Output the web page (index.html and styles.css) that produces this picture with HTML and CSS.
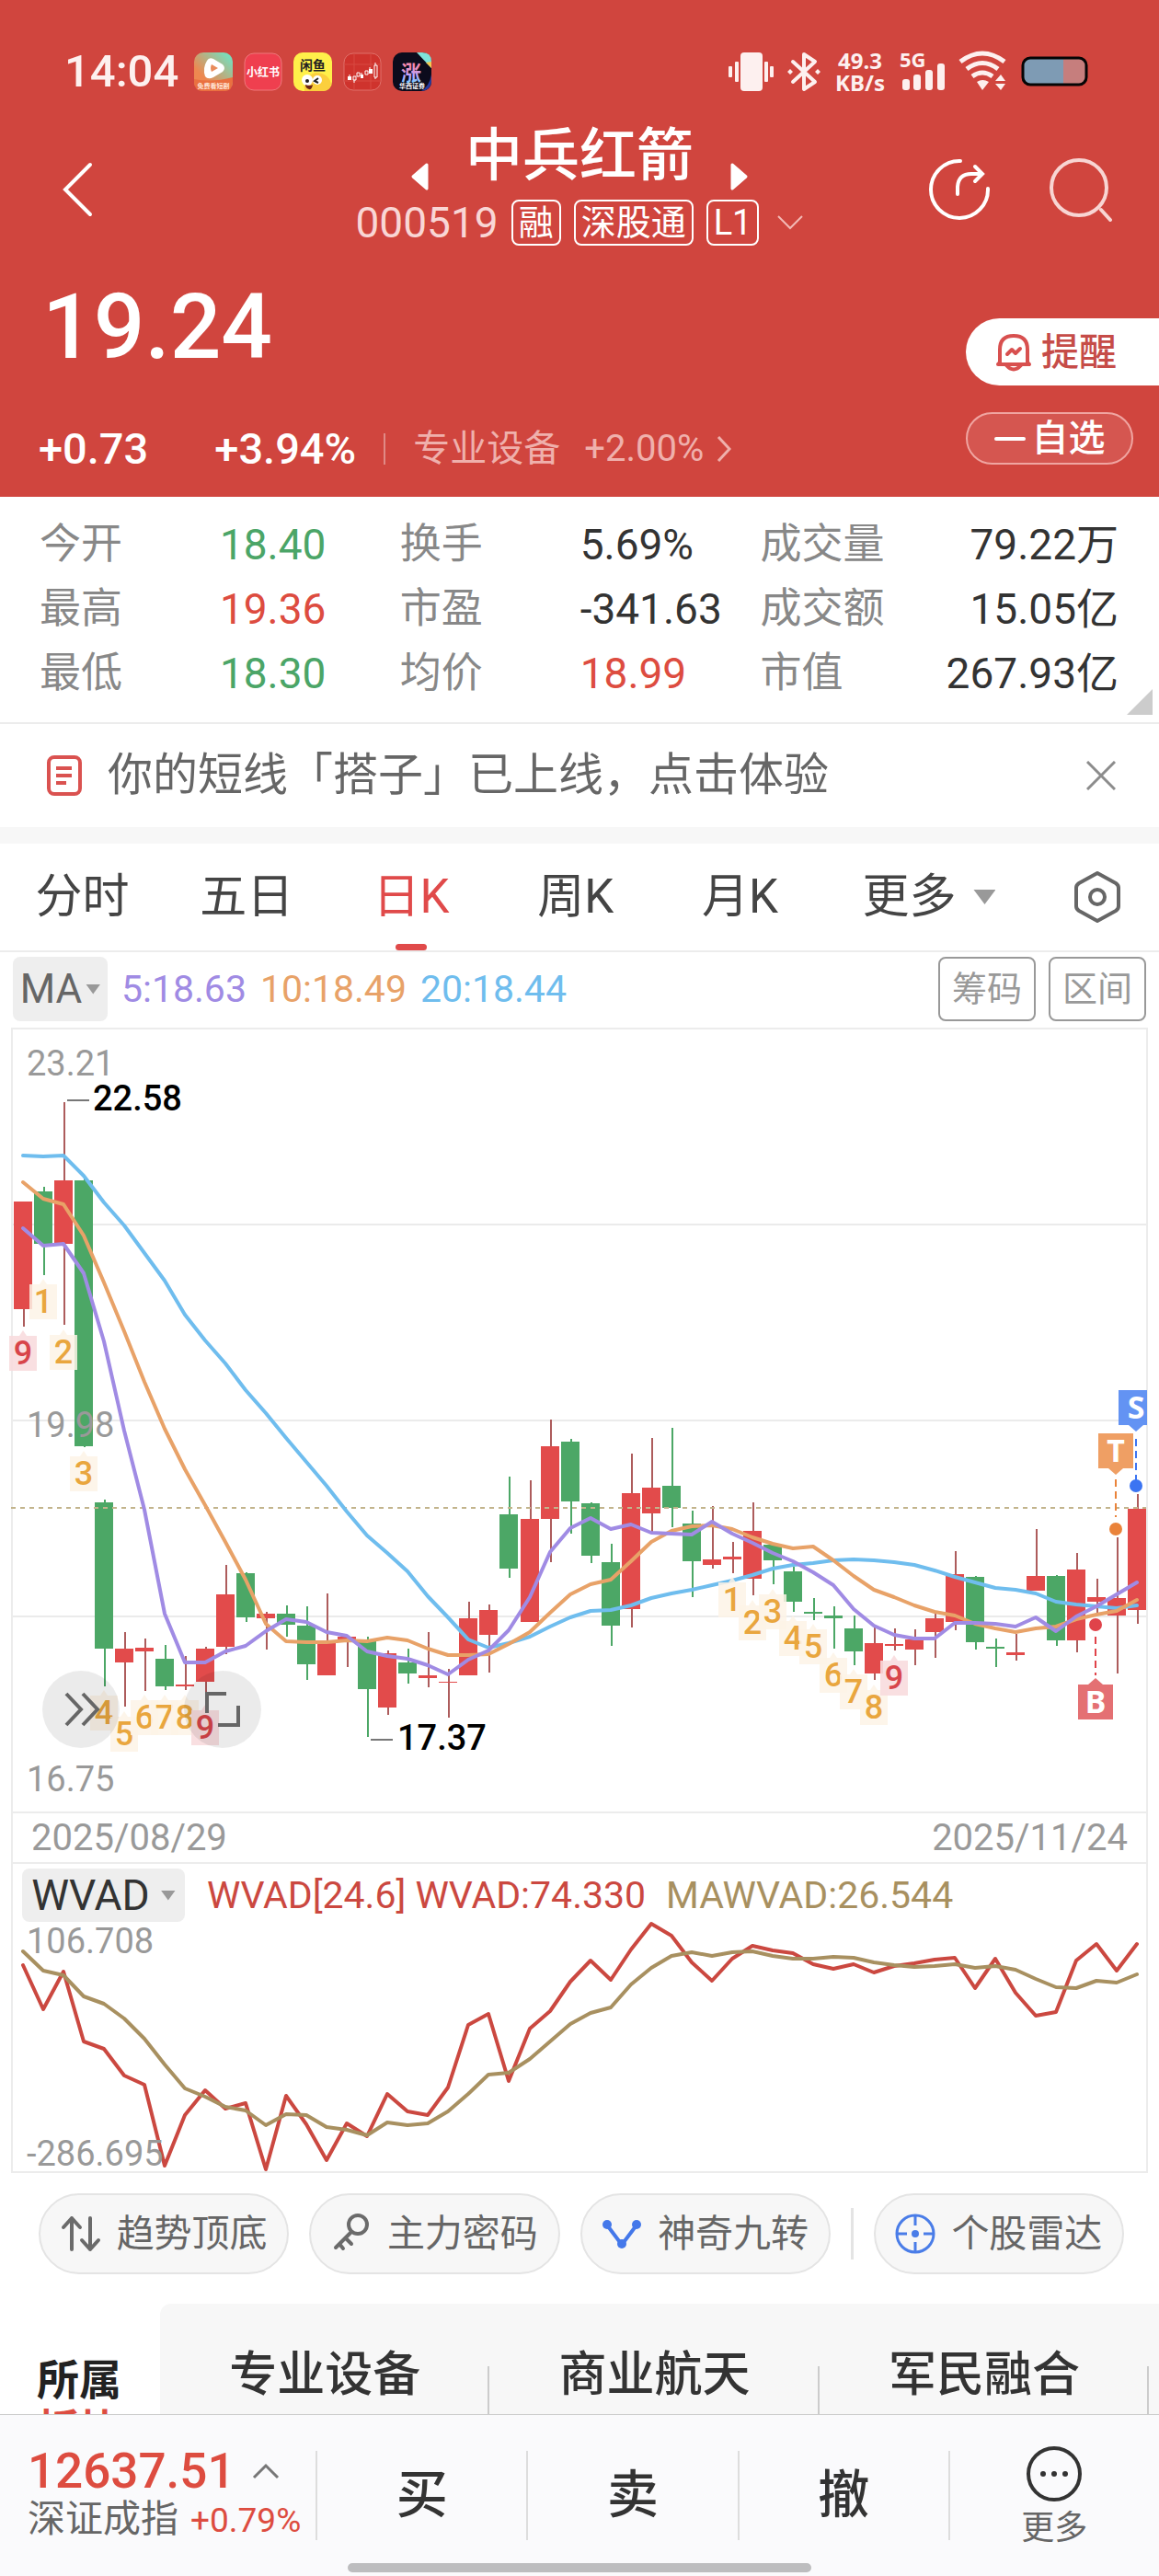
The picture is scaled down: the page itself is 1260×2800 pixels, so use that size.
FILE: index.html
```html
<!DOCTYPE html>
<html lang="zh-CN">
<head>
<meta charset="utf-8">
<meta name="viewport" content="width=device-width, initial-scale=1">
<title>中兵红箭 000519</title>
<link rel="stylesheet" href="styles.css">
</head>
<body>
<div class="app">
  <header class="hero">
    <div class="status">
      <time class="clock">14:04</time>
      <div class="app-icons">
        <svg viewBox="0 0 42 42" aria-hidden="true">
          <defs>
            <linearGradient id="video" x1="0" y1="1" x2="1" y2="0"><stop offset="0.3" stop-color="#ee8850"/><stop offset="0.9" stop-color="#79dcbb"/></linearGradient>
            <linearGradient id="rise" x1="0" y1="0" x2="0" y2="1"><stop offset="0.2" stop-color="#f58ab0"/><stop offset="0.6" stop-color="#b9a4ff"/><stop offset="1" stop-color="#6fd6ff"/></linearGradient>
          </defs>
          <rect width="42" height="42" rx="10" fill="url(#video)"/>
          <path d="M0 29Q20 33 42 27V32Q42 42 32 42H10Q0 42 0 32Z" fill="#ea7040"/>
          <path d="M14 9Q16 5 21 7L31 13Q35 17 31 21L21 27Q15 30 12 26Q9 17 14 9Z" fill="#fff"/>
          <path d="M19 13L26 17L19 21Q17 17 19 13Z" fill="#e98b5b"/>
          <text x="21" y="39" class="mini mini-xs" fill="#ffe6d8">免费看短剧</text>
        </svg>
        <svg viewBox="0 0 42 42" aria-hidden="true">
          <rect x="1" y="1" width="40" height="40" rx="10" fill="#ef3f4f" stroke="#f0787c"/>
          <text x="21" y="26" class="mini mini-md" fill="#fff">小红书</text>
        </svg>
        <svg viewBox="0 0 42 42" aria-hidden="true">
          <rect width="42" height="42" rx="10" fill="#fff04a"/>
          <circle cx="24" cy="34" r="8" fill="#fbcf3d"/><path d="M12 42Q10 26 24 22Q38 22 41 34Q40 42 32 42Z" fill="#fbcf3d"/>
          <circle cx="15" cy="30" r="6" fill="#fff"/><circle cx="26" cy="30" r="5" fill="#fff"/>
          <circle cx="15" cy="31" r="2" fill="#222"/><path d="M27 28L23 31L27 33" fill="none" stroke="#222" stroke-width="2"/>
          <path d="M13 35Q18 37 21 35Q20 41 17 40Q13 39 13 35Z" fill="#6b2418"/>
          <text x="21" y="19" class="mini mini-lg" fill="#222">闲鱼</text>
        </svg>
        <svg viewBox="0 0 42 42" aria-hidden="true">
          <rect x="1" y="1" width="40" height="40" rx="10" fill="#cf332d" stroke="#e0706a"/>
          <path d="M12 1V41M30 1V41M1 13H41M1 31H41" stroke="#d84a43" fill="none"/>
          <path d="M5 26h4v4H5zM19 24h3v4h-3zM28 18h4v5h-4z" fill="#fff"/>
          <path d="M11 26h3v4h-3zM15 22h3v4h-3zM24 20h3v4h-3zM34 14h3v13h-3zM35 11v3M35 27v2M12 30v3M7 24v2M29 16v2M20 22v2" fill="none" stroke="#fff"/>
        </svg>
        <svg viewBox="0 0 42 42" aria-hidden="true">
          <rect width="42" height="42" rx="10" fill="#0c0b1c"/>
          <path d="M26 0H32Q42 0 42 10V17Z" fill="#7fe3da"/><path d="M36 11L42 17V10Z" fill="#f6c84e"/>
          <path d="M31 42Q42 41 42 30V24Q40 36 31 42Z" fill="#283ca0"/>
          <text x="20" y="30" class="mini mini-xl" fill="url(#rise)">涨</text>
          <text x="21" y="39" class="mini mini-xs" fill="#fff">华西证券</text>
        </svg>
      </div>
      <div class="status-right">
        <svg width="50" height="44" viewBox="0 0 50 44" class="soft" aria-label="振动">
          <rect x="13" y="1" width="24" height="42" rx="4"/><rect x="0" y="16" width="4" height="12" rx="1"/><rect x="7" y="11" width="4" height="22" rx="1"/><rect x="39" y="11" width="4" height="22" rx="1"/><rect x="45" y="16" width="4" height="12" rx="1"/>
        </svg>
        <svg width="36" height="44" viewBox="0 0 36 44" class="soft-line" aria-label="蓝牙">
          <path d="M6 11L30 33L18 41V3L30 11L6 33" stroke-width="4" stroke-linejoin="round" stroke-linecap="round"/><path d="M0 22L3 19L6 22L3 25ZM30 22L33 19L36 22L33 25Z" fill="#fdf0ef" stroke="none"/>
        </svg>
        <div class="speed"><span>49.3</span><span>KB/s</span></div>
        <svg width="50" height="44" viewBox="0 0 50 44" class="soft" aria-label="信号">
          <text x="0" y="17" class="net">5G</text>
          <rect x="3" y="30" width="8" height="12" rx="3"/><rect x="15" y="25" width="8" height="17" rx="3"/><rect x="28" y="20" width="8" height="22" rx="3"/><rect x="41" y="13" width="8" height="29" rx="3"/>
        </svg>
        <svg width="54" height="44" viewBox="0 0 54 44" class="soft-line" aria-label="无线网络">
          <path d="M2 11Q26 -7 50 11M9 19Q26 6 43 19M15 27Q26 19 37 27" stroke-width="5"/>
          <path d="M20 33Q26 29 33 33L26 42ZM40 32L46 25L51 32ZM40 35H51L46 42Z" fill="#fdf0ef" stroke="none"/>
        </svg>
        <svg width="74" height="34" viewBox="0 0 74 34" aria-label="电量">
          <rect x="2" y="2" width="69" height="29" rx="8" fill="#c67e7d"/><path d="M46 2H10Q2 2 2 10V23Q2 31 10 31H46Z" fill="#7e9bb4"/><rect x="2" y="2" width="69" height="29" rx="8" fill="none" stroke="#050505" stroke-width="3"/>
        </svg>
      </div>
    </div>

    <div class="topbar">
      <button class="icon-btn back" aria-label="返回"><svg width="34" height="60" viewBox="0 0 34 60"><path d="M31 3L4 30L31 57" class="white-line"/></svg></button>
      <div class="title">
        <div class="title-main">
          <button class="icon-btn" aria-label="上一只"><svg width="22" height="32" viewBox="0 0 22 32"><path d="M18 3L3 16L18 29Z" class="arrow"/></svg></button>
          <h1>中兵红箭</h1>
          <button class="icon-btn" aria-label="下一只"><svg width="22" height="32" viewBox="0 0 22 32"><path d="M4 3L19 16L4 29Z" class="arrow"/></svg></button>
        </div>
        <div class="title-sub">
          <span class="code">000519</span><span class="tag">融</span><span class="tag">深股通</span><span class="tag">L1</span>
          <svg class="chev" width="28" height="18" viewBox="0 0 28 18"><path d="M1 2L14 15L27 2" fill="none" stroke="#f3b9b5" stroke-width="2"/></svg>
        </div>
      </div>
      <div class="tools">
        <button class="icon-btn" aria-label="分享"><svg width="70" height="70" viewBox="0 0 70 70"><g class="white-line"><path d="M36 4A31 31 0 1 0 66 34"/><path d="M33 40V32Q34 18 48 18H59M52 10L60 18L52 26"/></g></svg></button>
        <button class="icon-btn" aria-label="搜索"><svg width="70" height="70" viewBox="0 0 70 70"><g class="pink-line"><circle cx="33" cy="33" r="30"/><path d="M57 57L67 68"/></g></svg></button>
      </div>
    </div>

    <div class="quote">
      <div class="quote-left">
        <div class="price">19.24</div>
        <div class="changes">
          <span class="chg">+0.73</span><span class="pct">+3.94%</span>
          <a class="industry" href="#industry"><span>专业设备</span><span>+2.00%</span><svg width="16" height="28" viewBox="0 0 16 28"><path d="M2 1L14 14L2 27" fill="none" stroke="#efb0ac" stroke-width="3"/></svg></a>
        </div>
      </div>
      <div class="quote-right">
        <button class="remind"><svg width="40" height="42" viewBox="0 0 40 42"><g fill="none" stroke="#d8504f" stroke-width="4" stroke-linejoin="round" stroke-linecap="round"><path d="M5 32V18Q5 3 20 3Q35 3 35 18V32L37 34H3Z"/><path d="M12 35Q20 44 28 35"/><path d="M13 23L18 18L22 22L27 17"/></g></svg>提醒</button>
        <button class="watch"><svg width="34" height="6" viewBox="0 0 34 6"><path d="M2 3H32" stroke="#fff" stroke-width="4" stroke-linecap="round"/></svg>自选</button>
      </div>
    </div>
  </header>

  <section class="stats">
    <table>
      <colgroup><col class="c1"><col class="c2"><col class="c3"><col class="c4"><col class="c5"><col></colgroup>
      <tr><th>今开</th><td class="down">18.40</td><th>换手</th><td>5.69%</td><th>成交量</th><td class="end">79.22万</td></tr>
      <tr><th>最高</th><td class="up">19.36</td><th>市盈</th><td>-341.63</td><th>成交额</th><td class="end">15.05亿</td></tr>
      <tr><th>最低</th><td class="down">18.30</td><th>均价</th><td class="up">18.99</td><th>市值</th><td class="end">267.93亿</td></tr>
    </table>
    <i class="corner"></i>
  </section>

  <section class="notice">
    <svg width="40" height="44" viewBox="0 0 40 44"><g fill="none" stroke="#da5250" stroke-width="4"><rect x="3" y="2" width="34" height="40" rx="6"/><path d="M11 14H28M11 22H28M11 30H22"/></g></svg>
    <p>你的短线「搭子」已上线，点击体验</p>
    <button class="icon-btn" aria-label="关闭"><svg width="32" height="32" viewBox="0 0 32 32"><path d="M1 1L31 31M31 1L1 31" stroke="#8c8c8c" stroke-width="3"/></svg></button>
  </section>

  <nav class="tabs">
    <button>分时</button><button>五日</button><button class="active">日K</button><button>周K</button><button>月K</button>
    <button class="more">更多<i class="tri"></i></button>
    <button class="settings" aria-label="设置"><svg width="52" height="58" viewBox="0 0 52 58"><g fill="none" stroke="#666" stroke-width="4" stroke-linejoin="round"><path d="M26 3L46 14Q49 16 49 19V39Q49 42 46 44L26 55L6 44Q3 42 3 39V19Q3 16 6 14Z"/><circle cx="26" cy="29" r="8"/></g></svg></button>
  </nav>

  <div class="legend">
    <button class="picker">MA<i class="tri small"></i></button>
    <span class="ma5">5:18.63</span><span class="ma10">10:18.49</span><span class="ma20">20:18.44</span>
    <div class="legend-end"><button class="outline">筹码</button><button class="outline">区间</button></div>
  </div>

  <section class="charts">
    <div class="kline">
      <svg id="kline" viewBox="14 1120 1232 850" role="img" aria-label="日K线">
        <path class="grid" d="M14 1332H1246M14 1545H1246M14 1758H1246"/>
        <g id="candles"></g>
        <path class="last" d="M12 1640H1246"/>
        <g id="averages"></g>
        <g id="badges"></g>
        <text x="29" y="1170" class="axis">23.21</text>
        <text x="29" y="1563" class="axis">19.98</text>
        <text x="29" y="1948" class="axis">16.75</text>
        <path class="lead" d="M73 1197H97M403 1892H427"/>
        <text x="101" y="1208" class="extreme">22.58</text>
        <text x="432" y="1903" class="extreme">17.37</text>
        <g class="flag-s"><path class="dash" d="M1235 1565V1610"/><circle cx="1235" cy="1616" r="7"/><path class="flag" d="M1217 1512H1247V1550H1243L1235 1557L1227 1550H1216V1512Z"/><text x="1235" y="1543">S</text></g>
        <g class="flag-t"><path class="dash" d="M1213 1609V1650"/><circle cx="1213" cy="1663" r="7"/><path class="flag" d="M1194 1559H1232V1597H1221L1213 1604L1205 1597H1194Z"/><text x="1213" y="1590">T</text></g>
        <g class="flag-b"><path class="dash" d="M1191 1780V1822"/><circle cx="1191" cy="1767" r="7"/><path class="flag" d="M1172 1832H1183L1191 1825L1199 1832H1210V1870H1172Z"/><text x="1191" y="1863">B</text></g>
      </svg>
      <div class="floaters">
        <button aria-label="前进"><svg width="84" height="84" viewBox="0 0 84 84"><path d="M26 25L42 42L26 59M44 25L60 42L44 59" class="float-line"/></svg></button>
        <button aria-label="全屏"><svg width="84" height="84" viewBox="0 0 84 84"><path d="M25 46V25H46M59 38V59H37" class="float-line"/></svg></button>
      </div>
    </div>
    <div class="dates"><time>2025/08/29</time><time>2025/11/24</time></div>
    <div class="wvad-head">
      <button class="picker dark">WVAD<i class="tri small"></i></button>
      <span class="w1">WVAD[24.6] WVAD:74.330</span><span class="w2">MAWVAD:26.544</span>
    </div>
    <svg id="wvad" viewBox="14 2092 1232 269" role="img" aria-label="WVAD">
      <g id="wvad-lines"></g>
      <text x="29" y="2124" class="axis">106.708</text>
      <text x="29" y="2355" class="axis">-286.695</text>
    </svg>
  </section>

  <div class="chips">
    <button><svg width="44" height="44" viewBox="0 0 44 44"><g fill="none" stroke="#6b6b6b" stroke-width="4" stroke-linecap="round" stroke-linejoin="round"><path d="M12 39V5M3 15L12 5L21 15M32 5V39M23 29L32 39L41 29"/></g></svg>趋势顶底</button>
    <button><svg width="44" height="44" viewBox="0 0 44 44"><g fill="none" stroke="#6b6b6b" stroke-width="4" stroke-linecap="round"><circle cx="29" cy="12" r="10"/><path d="M22 20L5 37M9 33L13 38M16 27L22 33"/></g></svg>主力密码</button>
    <button><svg width="44" height="44" viewBox="0 0 44 44"><path d="M7 14L22 34L37 14" fill="none" stroke="#4478ea" stroke-width="4"/><g fill="#4478ea"><circle cx="6" cy="12" r="5"/><circle cx="38" cy="12" r="5"/><circle cx="22" cy="33" r="5"/></g></svg>神奇九转</button>
    <i></i>
    <button><svg width="44" height="44" viewBox="0 0 44 44"><g fill="none" stroke="#4a7de8" stroke-width="3"><circle cx="22" cy="22" r="20"/><path d="M22 2V13M22 31V42M2 22H13M31 22H42"/></g><circle cx="22" cy="22" r="4" fill="#4a7de8"/></svg>个股雷达</button>
  </div>

  <section class="sectors" id="industry">
    <h2>所属<em>板块</em></h2>
    <ul><li>专业设备</li><li>商业航天</li><li>军民融合</li></ul>
  </section>

  <footer class="bar">
    <div class="bar-items">
      <a class="index" href="#index">
        <span class="index-top">12637.51<svg width="32" height="18" viewBox="0 0 32 18"><path d="M3 16L16 3L29 16" fill="none" stroke="#777" stroke-width="3"/></svg></span>
        <span class="index-sub">深证成指<b>+0.79%</b></span>
      </a>
      <button>买</button><button>卖</button><button>撤</button>
      <button class="bar-more"><svg width="62" height="62" viewBox="0 0 62 62"><circle cx="31" cy="31" r="28" fill="none" stroke="#333" stroke-width="4"/><g fill="#333"><circle cx="19" cy="31" r="3"/><circle cx="31" cy="31" r="3"/><circle cx="43" cy="31" r="3"/></g></svg>更多</button>
    </div>
    <div class="home"></div>
  </footer>
</div>
<script src="chart.js"></script>
</body>
</html>
```
FILE: chart.js
```js
const NS = 'http://www.w3.org/2000/svg';
const add = (parent, tag, attrs, text) => {
  const el = document.createElementNS(NS, tag);
  for (const key in attrs) el.setAttribute(key, attrs[key]);
  if (text) el.textContent = text;
  parent.appendChild(el);
};
const byId = id => document.getElementById(id);
const xAt = i => Math.round(25 + i * 22.02);

// direction, body top, body bottom, wick top, wick bottom
const candles = [
  ['u',1307,1424,1307,1443],['d',1296,1353,1291,1387],['u',1284,1353,1199,1441],['d',1284,1573,1282,1574],
  ['d',1634,1793,1631,1834],['u',1793,1808,1775,1856],['u',1792,1796,1782,1839],['d',1804,1834,1789,1838],
  ['u',1832,1834,1801,1838],['u',1793,1829,1791,1850],['u',1734,1791,1702,1799],['d',1711,1759,1710,1764],
  ['u',1755,1760,1753,1794],['d',1755,1767,1746,1780],['d',1768,1810,1747,1827],['u',1785,1822,1733,1822],
  ['u',1780,1783,1779,1813],['d',1783,1837,1780,1889],['u',1798,1857,1795,1865],['d',1808,1820,1793,1831],
  ['u',1822,1825,1775,1835],['u',1829,1830,1815,1868],['u',1760,1822,1742,1822],['u',1751,1778,1745,1819],
  ['d',1647,1706,1606,1716],['u',1652,1764,1610,1764],['u',1573,1652,1544,1699],['d',1568,1633,1565,1668],
  ['d',1635,1692,1634,1700],['d',1699,1768,1679,1790],['u',1624,1750,1581,1770],['u',1618,1646,1564,1666],
  ['d',1616,1640,1553,1661],['d',1657,1698,1643,1737],['u',1696,1702,1638,1706],['u',1693,1696,1677,1711],
  ['u',1665,1717,1634,1735],['d',1680,1697,1680,1723],['d',1709,1742,1704,1753],['d',1753,1755,1738,1762],
  ['d',1757,1760,1747,1793],['d',1771,1796,1757,1811],['u',1787,1820,1770,1827],['u',1788,1790,1771,1795],
  ['u',1783,1794,1772,1811],['u',1760,1775,1753,1803],['u',1712,1764,1687,1773],['d',1715,1786,1714,1794],
  ['d',1791,1793,1782,1813],['u',1797,1800,1777,1806],['u',1714,1730,1663,1730],['d',1714,1784,1713,1790],
  ['u',1707,1784,1689,1797],['u',1737,1742,1717,1754],['u',1738,1757,1672,1820],['u',1641,1751,1625,1766]
];
candles.forEach(([dir, top, bottom, high, low], i) => {
  const x = xAt(i);
  add(byId('candles'), 'rect', { class: 'wick-' + dir, x: x, y: high, width: 2, height: low - high });
  add(byId('candles'), 'rect', { class: 'body-' + dir, x: x - 10, y: top, width: 20, height: bottom - top });
});

const line = (parent, name, values) =>
  add(byId(parent), 'polyline', { class: 'line ' + name, points: values.map((y, i) => xAt(i) + ',' + y).join(' ') });

line('averages', 'ma20', [1257,1258,1257,1279,1308,1333,1363,1393,1430,1458,1483,1512,1537,1564,1590,1616,1644,1670,1689,1709,1736,1759,1783,1792,1787,1780,1769,1759,1752,1751,1746,1738,1733,1729,1724,1719,1713,1706,1702,1700,1697,1696,1697,1699,1702,1708,1715,1721,1727,1729,1733,1742,1745,1747,1749,1746]);
line('averages', 'ma10', [1286,1304,1310,1344,1395,1448,1503,1554,1598,1637,1677,1718,1766,1785,1786,1786,1784,1785,1781,1784,1793,1800,1800,1799,1788,1775,1754,1734,1723,1718,1698,1677,1665,1660,1659,1663,1672,1679,1684,1682,1697,1714,1729,1737,1746,1753,1757,1766,1771,1775,1771,1769,1761,1756,1752,1740]);
line('averages', 'ma5', [1336,1355,1353,1385,1459,1556,1642,1755,1808,1808,1796,1790,1774,1761,1764,1775,1779,1796,1801,1804,1811,1821,1805,1795,1773,1737,1688,1662,1651,1663,1658,1667,1668,1669,1655,1668,1678,1689,1698,1710,1724,1750,1768,1778,1782,1782,1765,1765,1766,1769,1759,1774,1758,1747,1734,1721]);
line('wvad-lines', 'wvad', [2137,2185,2144,2220,2228,2257,2267,2355,2300,2273,2293,2287,2359,2279,2310,2349,2309,2323,2277,2296,2300,2270,2202,2190,2263,2206,2187,2155,2132,2153,2120,2092,2105,2134,2154,2130,2116,2121,2124,2136,2141,2136,2145,2138,2135,2131,2129,2162,2130,2167,2192,2188,2132,2114,2143,2114]);
line('wvad-lines', 'mawvad', [2122,2143,2148,2171,2179,2195,2217,2245,2271,2280,2291,2295,2311,2299,2300,2313,2316,2322,2308,2311,2309,2296,2277,2256,2254,2239,2220,2201,2189,2183,2158,2140,2127,2123,2127,2123,2122,2127,2130,2130,2128,2129,2134,2137,2139,2138,2136,2140,2138,2142,2152,2161,2162,2154,2156,2147]);

// candle index, baseline, count
[[0,1484,9],[1,1428,1],[2,1483,2],[3,1615,3],[4,1875,4],[5,1898,5],[6,1880,6],[7,1880,7],[8,1880,8],[9,1891,9],
 [35,1752,1],[36,1777,2],[37,1765,3],[38,1794,4],[39,1803,5],[40,1834,6],[41,1852,7],[42,1869,8],[43,1837,9]]
  .forEach(([i, y, n]) => {
    const x = xAt(i), kind = n === 9 ? 'nine' : 'count';
    add(byId('badges'), 'path', { class: kind + '-box', d: `M${x - 15} ${y - 31}h11l4 -6l4 6h11v38h-30z` });
    add(byId('badges'), 'text', { class: 'badge ' + kind, x: x, y: y }, String(n));
  });
```
FILE: styles.css
```css
* { box-sizing: border-box; }
body, h1, h2, p, ul { margin: 0; padding: 0; }
body { background: #fff; color: #333; font-family: Roboto, "Noto Sans CJK SC", sans-serif; }
button { margin: 0; padding: 0; border: 0; background: none; color: inherit; font: inherit; cursor: pointer; }
a { color: inherit; text-decoration: none; }
svg { display: block; flex: none; }
.app { display: flex; flex-direction: column; min-height: 100vh; }
.icon-btn { display: block; }

/* red header */
.hero { background: #d0453e; color: #fff; }
.status { display: flex; align-items: center; height: 112px; padding: 44px 76px 0 70px; }
.clock { font-size: 49px; line-height: 44px; font-weight: 500; color: #fdf0ef; }
.app-icons { display: flex; gap: 12px; margin-left: 17px; }
.app-icons svg { width: 42px; height: 42px; }
.mini { text-anchor: middle; font-weight: 700; }
.mini-xs { font-size: 7px; }
.mini-md { font-size: 12px; }
.mini-lg { font-size: 14px; }
.mini-xl { font-size: 22px; }
.status-right { display: flex; align-items: center; gap: 14px; margin-left: auto; }
.status-right svg { overflow: visible; }
.soft { fill: #fdf0ef; }
.soft-line { fill: none; stroke: #fdf0ef; }
.speed { display: flex; flex-direction: column; width: 58px; font: 700 24px/24px "Noto Sans", sans-serif; text-align: center; color: #fdf0ef; }
.net { font: 700 22px "Noto Sans", sans-serif; }
.topbar { display: grid; grid-template-columns: 1fr auto 1fr; align-items: center; padding: 27px 50px 9px; }
.topbar .back { justify-self: start; margin: 6px 0 0 17px; }
.white-line { fill: none; stroke: #fff; stroke-width: 4; stroke-linecap: round; }
.pink-line { fill: none; stroke: #f8d5d3; stroke-width: 4; stroke-linecap: round; }
.arrow { fill: #fff; stroke: #fff; stroke-width: 3; stroke-linejoin: round; }
.title { display: flex; flex-direction: column; align-items: center; gap: 14px; }
.title-main { display: flex; align-items: flex-end; gap: 38px; height: 64px; }
.title-main .icon-btn { margin-bottom: -5px; }
h1 { font-size: 62px; line-height: 62px; font-weight: 500; align-self: flex-start; }
.title-sub { display: flex; align-items: center; gap: 14px; }
.code { font-size: 46px; line-height: 50px; color: #f9d6d5; }
.tag { height: 50px; padding: 0 6px; border: 2px solid #fff; border-radius: 8px; font-size: 38px; line-height: 46px; }
.chev { margin-left: 6px; }
.tools { display: flex; gap: 62px; justify-self: end; margin-top: 6px; }
.quote { display: flex; justify-content: space-between; padding-left: 42px; }
.quote-left { padding: 31px 0 28px; }
.price { padding-left: 4px; font-size: 98px; line-height: 98px; font-weight: 500; }
.changes { display: flex; align-items: center; margin-top: 59px; font-size: 47px; line-height: 48px; font-weight: 500; }
.pct { margin-left: 72px; }
.industry { display: flex; align-items: center; gap: 26px; margin-left: 30px; padding-left: 30px; border-left: 2px solid #e08a86; font-size: 40px; line-height: 34px; font-weight: 400; color: #efb0ac; }
.industry svg { margin-left: -12px; }
.quote-right { display: flex; flex-direction: column; gap: 29px; width: 210px; padding-top: 70px; }
.remind { display: flex; align-items: center; gap: 10px; height: 73px; padding-left: 32px; border-radius: 37px 0 0 37px; background: #fff; color: #c64c48; font-size: 41px; font-weight: 500; line-height: 60px; }
.watch { display: flex; align-items: center; justify-content: center; gap: 7px; width: 182px; height: 57px; border: 2px solid #f0a5a1; border-radius: 29px; background: #d55650; font-size: 40px; font-weight: 500; line-height: 50px; }

/* key figures */
.stats { position: relative; padding: 17px 44px 18px 43px; border-bottom: 2px solid #ececec; }
.stats table { width: 100%; table-layout: fixed; border-collapse: collapse; font-size: 46px; line-height: 70px; }
.stats th, .stats td { height: 70px; padding: 0; text-align: left; font-weight: 400; white-space: nowrap; }
.stats th { font-size: 45px; color: #888; }
.stats .end { text-align: right; }
.c1 { width: 16.7%; } .c2 { width: 16.7%; } .c3 { width: 16.7%; } .c4 { width: 16.7%; } .c5 { width: 12%; }
.stats .up { color: #dd4c40; }
.stats .down { color: #4ba567; }
.corner { position: absolute; right: 7px; bottom: 8px; border-style: solid; border-width: 0 0 28px 28px; border-color: transparent transparent #ccc; }
.notice { display: flex; align-items: center; height: 130px; padding: 0 47px 0 50px; border-bottom: 18px solid #f7f7f7; }
.notice p { flex: 1; margin-left: 27px; font-size: 49px; line-height: 64px; color: #666; }

/* period tabs */
.tabs { display: flex; height: 118px; border-bottom: 2px solid #ececec; font-size: 51px; line-height: 60px; color: #444; }
.tabs button { position: relative; flex: 1; }
.tabs .active { color: #e04a4a; }
.tabs .active::after { content: ""; position: absolute; left: 50%; bottom: 0; width: 34px; height: 7px; margin-left: -17px; border-radius: 4px; background: #e04a4a; }
.tabs .more { display: flex; flex: 0 0 232px; align-items: center; justify-content: center; gap: 19px; }
.tabs .settings { display: flex; flex: 0 0 134px; align-items: center; justify-content: center; }
.tri { width: 24px; height: 16px; background: #999; clip-path: polygon(0 0, 100% 0, 50% 100%); }
.tri.small { width: 16px; height: 11px; }
.legend { display: flex; align-items: center; gap: 15px; padding: 5px 14px 7px; font-size: 41px; }
.picker { display: flex; align-items: center; justify-content: center; gap: 4px; width: 103px; height: 70px; border-radius: 8px; background: #eee; color: #666; font-size: 44px; }
.ma5 { color: #a08be4; } .ma10 { color: #e8a268; } .ma20 { color: #6fbdee; }
.legend-end { display: flex; gap: 14px; margin-left: auto; }
.outline { width: 106px; height: 70px; border: 2px solid #999; border-radius: 8px; color: #999; font-size: 38px; line-height: 60px; }

/* charts */
.charts { margin: 0 12px; border: 2px solid #ececec; }
.charts svg { overflow: visible; }
.kline { position: relative; }
#kline, #wvad { width: 100%; height: auto; }
.grid { fill: none; stroke: #ebebeb; stroke-width: 2; }
.last { fill: none; stroke: #c2b48c; stroke-width: 2; stroke-dasharray: 5 5; }
.lead { stroke: #777; stroke-width: 2; }
.axis { font-size: 38px; fill: #999; }
.extreme { font-size: 38px; font-weight: 500; fill: #000; }
.body-u { fill: #e24b4b; } .body-d { fill: #4ca766; }
.wick-u { fill: #ad5c5c; } .wick-d { fill: #4ca766; }
.line { fill: none; stroke-width: 4; stroke-linejoin: round; stroke-linecap: round; }
.line.ma5 { stroke: #a08be4; } .line.ma10 { stroke: #e8a268; } .line.ma20 { stroke: #6fbdee; }
.line.wvad { stroke: #cb4840; } .line.mawvad { stroke: #a89060; }
.badge { font-size: 36px; font-weight: 500; text-anchor: middle; }
.count { fill: #e9a63e; } .count-box { fill: #fdf3e6; opacity: 0.85; }
.nine { fill: #d8454a; } .nine-box { fill: #f8dcde; opacity: 0.9; }
.dash { stroke-width: 2; stroke-dasharray: 8 5; }
.flag { opacity: 0.95; }
.flag-s text, .flag-t text, .flag-b text { font: 700 34px "Noto Sans", sans-serif; text-anchor: middle; fill: #fff; }
.flag-s { fill: #3b74f2; } .flag-s .dash { stroke: #3b74f2; } .flag-s .flag { fill: #5b8df2; }
.flag-t { fill: #ea833a; } .flag-t .dash { stroke: #ea833a; } .flag-t .flag { fill: #ee9a5c; }
.flag-b { fill: #e0434a; } .flag-b .dash { stroke: #e0434a; } .flag-b .flag { fill: #e3686c; }
.floaters { position: absolute; left: 32px; bottom: 69px; display: flex; gap: 70px; }
.floaters button { border-radius: 50%; background: rgba(0, 0, 0, 0.08); }
.float-line { fill: none; stroke: #666; stroke-width: 4; }
.dates { display: flex; align-items: center; justify-content: space-between; height: 57px; padding: 0 20px; border: solid #ececec; border-width: 2px 0; font-size: 40px; line-height: 52px; color: #999; }
.wvad-head { display: flex; align-items: center; padding: 5px 10px 2px; font-size: 41px; line-height: 58px; white-space: nowrap; }
.picker.dark { width: 177px; height: 58px; gap: 12px; color: #333; font-size: 46px; }
.w1 { margin-left: 24px; color: #cb4840; }
.w2 { margin-left: 22px; color: #a89060; }

/* tool chips */
.chips { display: flex; align-items: center; gap: 22px; padding: 22px 38px 32px 42px; }
.chips button { display: flex; flex: 1; align-items: center; justify-content: center; gap: 17px; height: 88px; border: 2px solid #e4e4e4; border-radius: 44px; background: #f7f7f7; color: #666; font-size: 41px; line-height: 60px; white-space: nowrap; }
.chips i { width: 3px; height: 56px; background: #e4e4e4; }

/* sectors run under the bottom bar */
.sectors { display: flex; flex: 1 1 0; min-height: 118px; overflow: hidden; }
.sectors h2 { flex: 0 0 174px; padding: 56px 0 0 40px; font-size: 46px; line-height: 54px; font-weight: 700; color: #222; }
.sectors em { display: block; font-style: normal; color: #dd4c40; }
.sectors ul { display: flex; flex: 1; list-style: none; border-radius: 12px 0 0 0; background: #f7f7f7; }
.sectors li { flex: 0 0 33%; padding-top: 40px; font-size: 52px; line-height: 76px; font-weight: 500; text-align: center; background: linear-gradient(#ccc, #ccc) right 68px / 2px 100% no-repeat; white-space: nowrap; }

/* bottom bar */
.bar { padding: 39px 0 4px; border-top: 1px solid #ccc; background: #fafafc; }
.bar-items { display: flex; height: 97px; }
.bar-items > button { flex: 1; border-left: 2px solid #ddd; font-size: 56px; font-weight: 500; line-height: 97px; }
.index { flex: 0 0 343px; padding-left: 30px; white-space: nowrap; }
.index-top { display: flex; align-items: center; gap: 17px; font-size: 53px; line-height: 44px; font-weight: 500; color: #dd4c40; }
.index-sub { display: block; margin-top: 4px; font-size: 41px; line-height: 52px; color: #666; }
.index-sub b { margin-left: 13px; font-size: 37px; font-weight: 400; color: #dd4c40; }
.bar-items > .bar-more { display: flex; flex-direction: column; align-items: center; gap: 8px; font-size: 36px; line-height: 40px; font-weight: 400; color: #666; }
.bar-more svg { margin-top: -6px; }
.home { width: 40%; height: 10px; margin: 25px auto 0; border-radius: 5px; background: #bdbdbf; }
```
